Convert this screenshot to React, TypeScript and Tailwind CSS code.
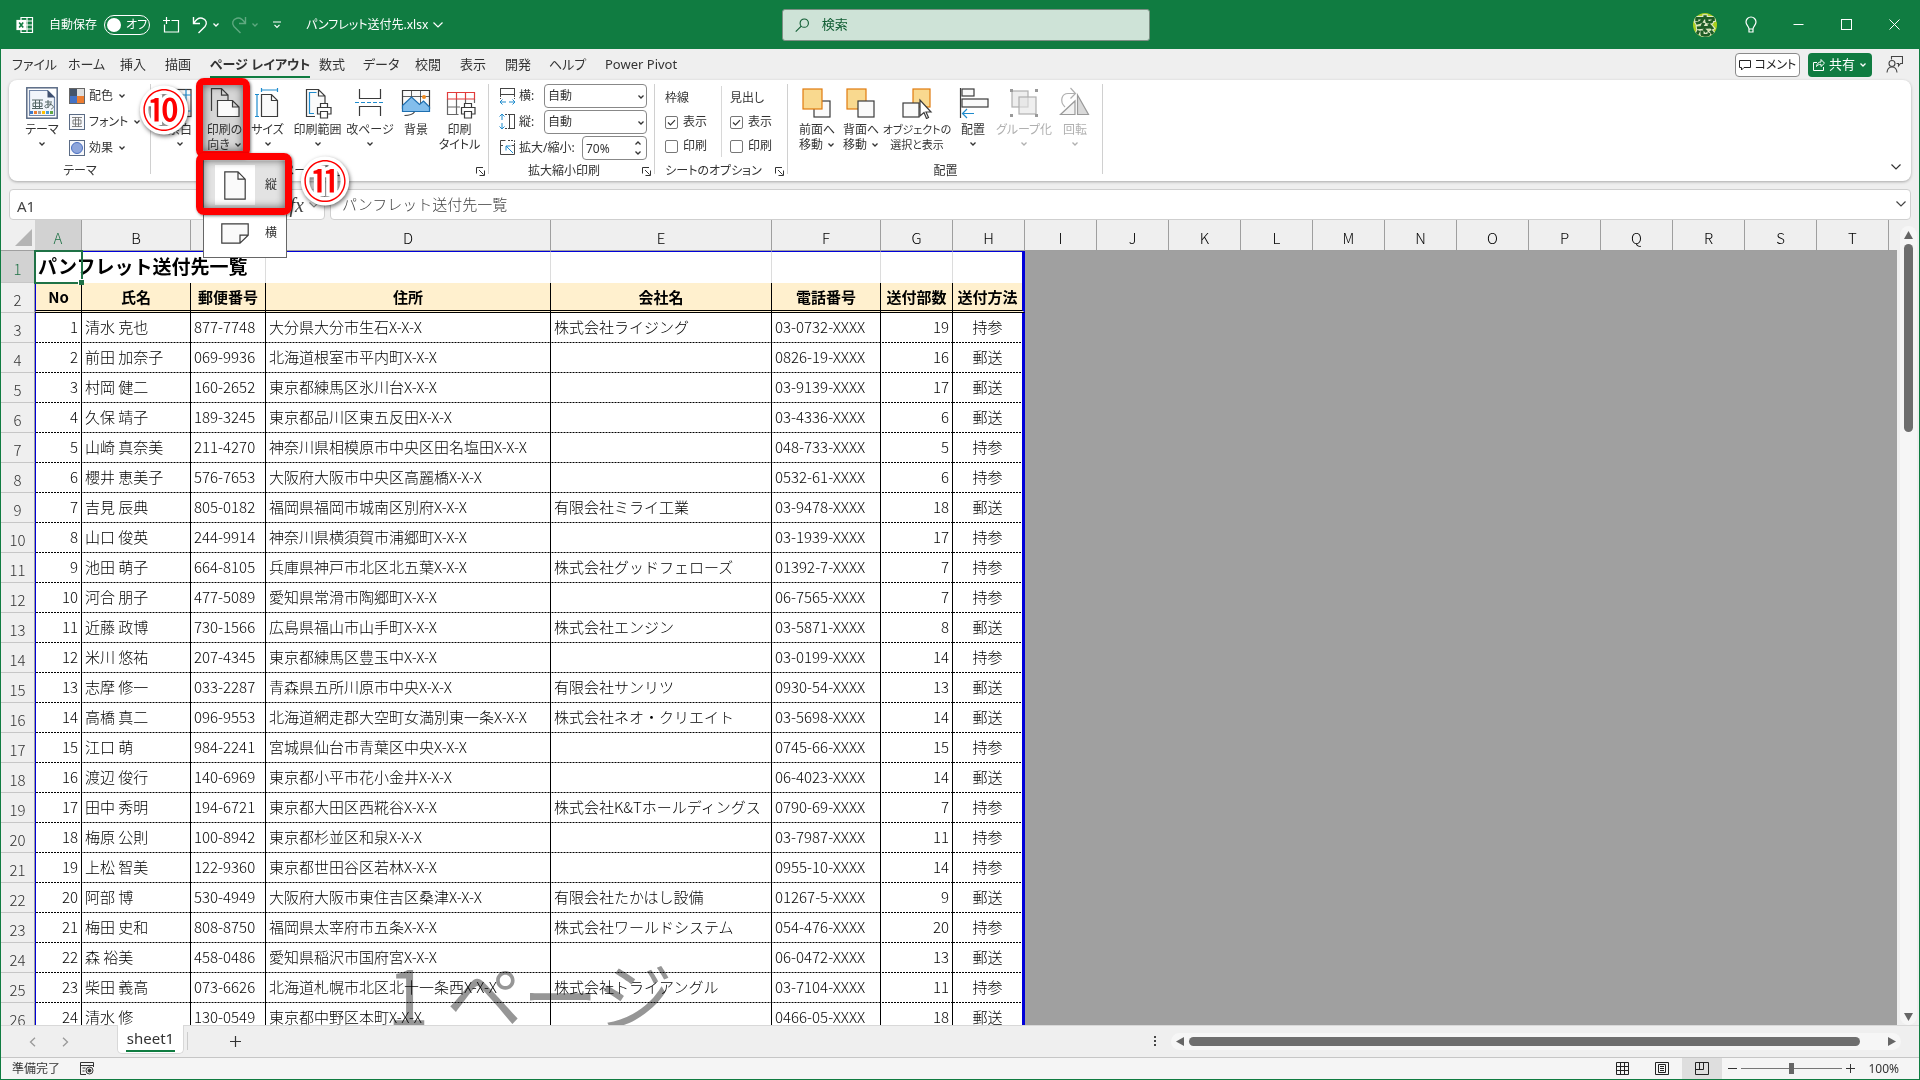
import React from 'react';

interface Tab {
  label: string;
  width: string;
  active?: boolean;
}

const tabs: Tab[] = [
  { label: 'ファイル', width: 'w-14' },
  { label: 'ホーム', width: 'w-[52px]' },
  { label: '挿入', width: 'w-[45px]' },
  { label: '描画', width: 'w-[45px]' },
  { label: 'ページ レイアウト', width: 'w-[109px]', active: true },
  { label: '数式', width: 'w-11' },
  { label: 'データ', width: 'w-[52px]' },
  { label: '校閲', width: 'w-[45px]' },
  { label: '表示', width: 'w-[45px]' },
  { label: '開発', width: 'w-11' },
  { label: 'ヘルプ', width: 'w-14' },
  { label: 'Power Pivot', width: 'w-24' },
];

const columns = [
  { name: 'A', width: 'w-[47px]', title: 'No' },
  { name: 'B', width: 'w-[109px]', title: '氏名' },
  { name: 'C', width: 'w-[75px]', title: '郵便番号' },
  { name: 'D', width: 'w-[285px]', title: '住所' },
  { name: 'E', width: 'w-[221px]', title: '会社名' },
  { name: 'F', width: 'w-[109px]', title: '電話番号' },
  { name: 'G', width: 'w-[72px]', title: '送付部数' },
  { name: 'H', width: 'w-[72px]', title: '送付方法' },
];

const emptyColumns = ['I', 'J', 'K', 'L', 'M', 'N', 'O', 'P', 'Q', 'R', 'S', 'T'];

// 氏名, 郵便番号, 住所, 会社名, 電話番号, 送付部数, 送付方法
type Recipient = [string, string, string, string, string, number, string];

const recipients: Recipient[] = [
  ['清水 克也', '877-7748', '大分県大分市生石X-X-X', '株式会社ライジング', '03-0732-XXXX', 19, '持参'],
  ['前田 加奈子', '069-9936', '北海道根室市平内町X-X-X', '', '0826-19-XXXX', 16, '郵送'],
  ['村岡 健二', '160-2652', '東京都練馬区氷川台X-X-X', '', '03-9139-XXXX', 17, '郵送'],
  ['久保 靖子', '189-3245', '東京都品川区東五反田X-X-X', '', '03-4336-XXXX', 6, '郵送'],
  ['山崎 真奈美', '211-4270', '神奈川県相模原市中央区田名塩田X-X-X', '', '048-733-XXXX', 5, '持参'],
  ['櫻井 恵美子', '576-7653', '大阪府大阪市中央区高麗橋X-X-X', '', '0532-61-XXXX', 6, '持参'],
  ['吉見 辰典', '805-0182', '福岡県福岡市城南区別府X-X-X', '有限会社ミライ工業', '03-9478-XXXX', 18, '郵送'],
  ['山口 俊英', '244-9914', '神奈川県横須賀市浦郷町X-X-X', '', '03-1939-XXXX', 17, '持参'],
  ['池田 萌子', '664-8105', '兵庫県神戸市北区北五葉X-X-X', '株式会社グッドフェローズ', '01392-7-XXXX', 7, '持参'],
  ['河合 朋子', '477-5089', '愛知県常滑市陶郷町X-X-X', '', '06-7565-XXXX', 7, '持参'],
  ['近藤 政博', '730-1566', '広島県福山市山手町X-X-X', '株式会社エンジン', '03-5871-XXXX', 8, '郵送'],
  ['米川 悠祐', '207-4345', '東京都練馬区豊玉中X-X-X', '', '03-0199-XXXX', 14, '持参'],
  ['志摩 修一', '033-2287', '青森県五所川原市中央X-X-X', '有限会社サンリツ', '0930-54-XXXX', 13, '郵送'],
  ['高橋 真二', '096-9553', '北海道網走郡大空町女満別東一条X-X-X', '株式会社ネオ・クリエイト', '03-5698-XXXX', 14, '郵送'],
  ['江口 萌', '984-2241', '宮城県仙台市青葉区中央X-X-X', '', '0745-66-XXXX', 15, '持参'],
  ['渡辺 俊行', '140-6969', '東京都小平市花小金井X-X-X', '', '06-4023-XXXX', 14, '郵送'],
  ['田中 秀明', '194-6721', '東京都大田区西糀谷X-X-X', '株式会社K&Tホールディングス', '0790-69-XXXX', 7, '持参'],
  ['梅原 公則', '100-8942', '東京都杉並区和泉X-X-X', '', '03-7987-XXXX', 11, '持参'],
  ['上松 智美', '122-9360', '東京都世田谷区若林X-X-X', '', '0955-10-XXXX', 14, '持参'],
  ['阿部 博', '530-4949', '大阪府大阪市東住吉区桑津X-X-X', '有限会社たかはし設備', '01267-5-XXXX', 9, '郵送'],
  ['梅田 史和', '808-8750', '福岡県太宰府市五条X-X-X', '株式会社ワールドシステム', '054-476-XXXX', 20, '持参'],
  ['森 裕美', '458-0486', '愛知県稲沢市国府宮X-X-X', '', '06-0472-XXXX', 13, '郵送'],
  ['柴田 義高', '073-6626', '北海道札幌市北区北十一条西X-X-X', '株式会社トライアングル', '03-7104-XXXX', 11, '持参'],
  ['清水 修', '130-0549', '東京都中野区本町X-X-X', '', '0466-05-XXXX', 18, '郵送'],
];

const Chevron: React.FC<{ className?: string; big?: boolean }> = ({ className = '', big }) => (
  <svg className={className} width={big ? 12 : 8} height={big ? 8 : 6} viewBox={big ? '0 0 12 8' : '0 0 8 6'} fill="none" stroke="currentColor" strokeWidth={big ? 1.2 : 1.3}>
    <path d={big ? 'M1.5 1.5 6 6l4.5-4.5' : 'M1.5 1.5 4 4l2.5-2.5'} />
  </svg>
);

const Launcher: React.FC<{ label: string }> = ({ label }) => (
  <button aria-label={label} className="absolute right-[3px] bottom-1 p-px">
    <svg width="9" height="9" viewBox="0 0 9 9" fill="none" stroke="#333" strokeWidth="1">
      <path d="M.5 6.5V.5H7M3 3l4.5 4.5M8.5 3.5v5h-5" />
    </svg>
  </button>
);

interface GroupProps {
  label: string;
  width: string;
  pad?: string;
  launcher?: boolean;
  children: React.ReactNode;
}

const Group: React.FC<GroupProps> = ({ label, width, pad = '', launcher, children }) => (
  <div className={`relative flex flex-col ${width}`}>
    <div className={`flex h-[83px] ${pad}`}>{children}</div>
    <div className={`text-center text-xs leading-4 ${launcher ? 'pr-4' : ''}`}>{label}</div>
    {launcher && <Launcher label={`${label} 詳細`} />}
    <span className="absolute right-0 top-1 h-[90px] w-px bg-[#d0d0d0]" />
  </div>
);

interface BigButtonProps {
  lines: string[];
  width: string;
  arrow?: boolean;
  inlineArrow?: boolean;
  disabled?: boolean;
  pressed?: boolean;
  small?: boolean;
  children: React.ReactNode;
}

const BigButton: React.FC<BigButtonProps> = ({ lines, width, arrow, inlineArrow, disabled, pressed, small, children }) => (
  <button
    disabled={disabled}
    className={`flex h-20 flex-col items-center pt-[7px] leading-[15px] whitespace-nowrap ${small ? 'text-[11px]' : 'text-xs'} ${width} ${disabled ? 'text-[#b0b0b0]' : ''} ${pressed ? 'bg-[#d6d6d6]' : ''}`}
  >
    <svg width="32" height="32" viewBox="0 0 32 32" fill="none" stroke={disabled ? '#b0b0b0' : '#3b3b3b'} strokeWidth="1.2" className="mb-[3px] shrink-0">
      {children}
    </svg>
    <span className="leading-[15px]">{lines[0]}</span>
    {lines[1] && (
      <span className="flex items-center gap-1 leading-[15px]">
        {lines[1]}
        {inlineArrow && <Chevron />}
      </span>
    )}
    {arrow && <Chevron className="mt-1" />}
  </button>
);

const TitleBar = () => (
  <header className="flex h-[49px] shrink-0 items-center bg-[#107c41] text-xs text-white">
    <div className="flex flex-1 items-center pl-4">
      <svg width="18" height="18" viewBox="0 0 18 18" fill="none" stroke="#fff" strokeWidth="1.2">
        <path d="M5 4V1.5h11.5v15H5V14M11 1.5v15M5 5h11.5M9 9h7.5M5 13h11.5" />
        <rect x="1" y="4.5" width="8.5" height="9" fill="#fff" />
        <path d="m3.2 6.5 4 5M7.2 6.5l-4 5" stroke="#107c41" strokeWidth="1.6" />
      </svg>
      <span className="ml-[15px]">自動保存</span>
      <button role="switch" aria-checked="false" className="ml-[7px] flex h-5 w-[46px] items-center gap-[5px] rounded-full border border-white pl-[2px]">
        <span className="size-[14px] rounded-full bg-white" />
        <span className="leading-4">オフ</span>
      </button>
      <button aria-label="上書き保存" className="ml-3">
        <svg width="18" height="18" viewBox="0 0 18 18" fill="none" stroke="#fff" strokeWidth="1.2">
          <path d="M2.500 8.500v7.500h14V4.500H9.500M4.500 1v7M1 4.500h7" />
        </svg>
      </button>
      <button aria-label="元に戻す" className="ml-3 flex items-center gap-1">
        <svg width="16" height="18" viewBox="0 0 16 18" fill="none" stroke="#fff" strokeWidth="1.4">
          <path d="M1.5 1v6.500H8M1.800 7.300C4 3.500 7 1.500 10.200 2.200c4.200 1 5.300 5.300 2.800 8.300L6.500 17" />
        </svg>
        <Chevron />
      </button>
      <button aria-label="やり直し" className="ml-[11px] flex items-center gap-1 text-[#5fa980]">
        <svg width="16" height="18" viewBox="0 0 16 18" fill="none" stroke="currentColor" strokeWidth="1.4">
          <path d="M14.500 1v6.500H8M14.200 7.300C12 3.500 9 1.500 5.800 2.200 1.600 3.200.5 7.500 3 10.500L9.500 17" />
        </svg>
        <Chevron />
      </button>
      <button aria-label="クイック アクセス ツール バーのユーザー設定" className="ml-[13px]">
        <svg width="10" height="8" viewBox="0 0 10 8" fill="none" stroke="#fff" strokeWidth="1.2">
          <path d="M1 1h8M2.500 3.800 5 6.300l2.500-2.500" />
        </svg>
      </button>
      <button className="ml-6 flex items-center gap-1 whitespace-nowrap">
        パンフレット送付先.xlsx
        <Chevron big />
      </button>
    </div>
    <label className="ml-4 flex h-8 w-[368px] items-center rounded-[3px] border border-[#7c8f84] bg-[#cee3d7] pl-3 text-[#0f5c32]">
      <svg width="16" height="16" viewBox="0 0 16 16" fill="none" stroke="currentColor" strokeWidth="1.2">
        <circle cx="10" cy="6" r="4.5" />
        <path d="m6.800 9.200-6 6" />
      </svg>
      <input type="text" placeholder="検索" className="ml-3 w-full bg-transparent text-[13px] outline-none placeholder:text-[#0f5c32]" />
    </label>
    <div className="flex flex-1 items-center justify-end pr-5">
      <button aria-label="アカウント" className="flex size-6 items-center justify-center overflow-hidden rounded-full bg-[#a9cf1c] text-[22px] leading-6 font-black text-[#1f5c25] [-webkit-text-stroke:2px_#dfe9c8] [paint-order:stroke_fill]">
        窓
      </button>
      <button aria-label="ヒント" className="ml-7">
        <svg width="12" height="18" viewBox="0 0 12 18" fill="none" stroke="#fff" strokeWidth="1.2">
          <path d="M4 13c0-2.500-3-4-3-7a5 5 0 0 1 10 0c0 3-3 4.500-3 7zM4 13v3h4v-3" />
        </svg>
      </button>
      <button aria-label="最小化" className="ml-9">
        <svg width="11" height="11" viewBox="0 0 11 11" stroke="#fff"><path d="M.5 5.500h10" /></svg>
      </button>
      <button aria-label="元のサイズに戻す" className="ml-[37px]">
        <svg width="11" height="11" viewBox="0 0 11 11" fill="none" stroke="#fff"><rect x=".5" y=".5" width="10" height="10" /></svg>
      </button>
      <button aria-label="閉じる" className="ml-[37px]">
        <svg width="11" height="11" viewBox="0 0 11 11" stroke="#fff"><path d="m.5.5 10 10M10.500.5l-10 10" /></svg>
      </button>
    </div>
  </header>
);

const TabRow = () => (
  <div className="flex h-[31px] shrink-0 items-center pr-4 pl-[11px]">
    <nav className="flex flex-1 text-[13px] leading-[18px] text-[#333]">
      {tabs.map(tab => (
        <div key={tab.label} className={`shrink-0 ${tab.width}`}>
          <button className={`border-b-2 pt-[3px] pb-[3px] whitespace-nowrap ${tab.active ? 'border-[#107c41] font-bold' : 'border-transparent'}`}>
            {tab.label}
          </button>
        </div>
      ))}
    </nav>
    <button className="flex h-6 w-[65px] items-center justify-center gap-1 rounded-[4px] border border-[#8a8a8a] bg-white text-xs whitespace-nowrap text-[#222]">
      <svg width="12" height="12" viewBox="0 0 12 12" fill="none" stroke="currentColor">
        <path d="M.5 1.500h11v7H5l-2.500 2.500V8.500h-2z" />
      </svg>
      コメント
    </button>
    <button className="ml-2 flex h-6 w-16 items-center justify-center gap-1 rounded-[4px] bg-[#107c41] text-[13px] whitespace-nowrap text-white">
      <svg width="12" height="13" viewBox="0 0 12 13" fill="none" stroke="currentColor">
        <path d="M4 4.500H.5v8h10V9M3.500 8.500c.5-3 2-4.500 4.500-4.500V1.500l3.500 3.700L8 8.500V6.300C6 6.300 4.500 7 3.500 8.500z" />
      </svg>
      共有
      <Chevron />
    </button>
    <button aria-label="状態の表示" className="ml-[14px]">
      <svg width="17" height="17" viewBox="0 0 17 17" fill="none" stroke="#444" strokeWidth="1.1">
        <path d="M5.500 3.500v-3h11v7h-2l-2 2.500V7.500h-2M1 16.500c.3-3.500 2-5.500 5-5.500s4.700 2 5 5.500" />
        <circle cx="6" cy="7.500" r="3" />
      </svg>
    </button>
  </div>
);

const ThemeItem: React.FC<{ label: string; children: React.ReactNode }> = ({ label, children }) => (
  <button className="flex h-[26px] items-center gap-1 text-xs whitespace-nowrap">
    <svg width="16" height="16" viewBox="0 0 16 16">{children}</svg>
    {label}
    <Chevron className="ml-px" />
  </button>
);

const Check: React.FC<{ label: string; on?: boolean }> = ({ label, on }) => (
  <label className="flex h-6 items-center gap-[5px] text-xs whitespace-nowrap">
    <span className="relative flex size-[13px] shrink-0">
      <input type="checkbox" defaultChecked={on} className="peer size-[13px] appearance-none rounded-[2px] border border-[#777] bg-white" />
      <svg className="pointer-events-none absolute top-0 left-0 hidden peer-checked:block" width="13" height="13" viewBox="0 0 13 13" fill="none" stroke="#333" strokeWidth="1.2">
        <path d="m3 6.500 2.500 2.500L10 4.200" />
      </svg>
    </span>
    {label}
  </label>
);

const OrientationMenu = () => (
  <div className="absolute top-[78px] left-0 z-20 w-[84px] border border-[#666] bg-white pt-[2px] text-xs">
    <button className="flex h-12 w-full items-center bg-[#e3e3e3] pl-[11px]">
      <span className="flex size-10 items-center justify-center bg-white">
        <svg width="22" height="29" viewBox="0 0 22 29" fill="#fafafa" stroke="#3b3b3b" strokeWidth="1.2">
          <path d="M.8.800h13.200l7.200 7.400v20H.800zM14 .800v7.400h7.200" />
        </svg>
      </span>
      <span className="ml-[10px]">縦</span>
    </button>
    <button className="flex h-12 w-full items-center pl-[17px]">
      <svg width="28" height="21" viewBox="0 0 28 21" fill="#fafafa" stroke="#3b3b3b" strokeWidth="1.2">
        <path d="M.8.800h26.400v11.400L19 20.200H.800zM19 20.200v-8h8.200" />
      </svg>
      <span className="ml-4">横</span>
    </button>
  </div>
);

const Callout: React.FC<{ text: string; className: string }> = ({ text, className }) => (
  <span className={`pointer-events-none absolute z-40 font-['Noto_Sans_CJK_JP',sans-serif] text-[44px] leading-[48px] font-medium text-[#f00] drop-shadow-[1px_2px_2px_rgba(0,0,0,0.55)] [-webkit-text-stroke:7px_#fff] [paint-order:stroke_fill] ${className}`}>
    {text}
  </span>
);

const Ribbon = () => (
  <section className="relative z-10 mx-2 flex h-[101px] shrink-0 rounded-[8px] bg-white text-[#333] shadow-[0_1px_3px_rgba(0,0,0,0.3)]">
    <Group label="テーマ" width="w-[142px]">
      <BigButton lines={['テーマ']} width="w-[60px] pl-[6px]" arrow>
        <rect x=".8" y=".8" width="30.4" height="30.4" fill="#fff" stroke="#5a6b85" strokeWidth="1.5" />
        <path d="M3.500 3.500h18l7 7v18h-25z" fill="#f1f5fb" stroke="#7186a8" />
        <path d="M21.500 3v7.500H29z" fill="#3f5070" stroke="none" />
        <path d="M6 13h11M6 21.500h11M9.500 13v8.500M13.500 13v8.500M7 16h9v3.500H7zM19 15h7M22 13v8M25 16c-1 4-5 6-6 4s4-4 7-2 0 4-1 4" stroke="#566" strokeWidth="1" />
        <g stroke="none">
          <rect x="4" y="24" width="3" height="3" fill="#3c78c8" />
          <rect x="8" y="24" width="3" height="3" fill="#ed7d31" />
          <rect x="12" y="24" width="3" height="3" fill="#a0a0a0" />
          <rect x="16" y="24" width="3" height="3" fill="#ffc000" />
          <rect x="20" y="24" width="3" height="3" fill="#4a9ad4" />
          <rect x="24" y="24" width="3" height="3" fill="#62a744" />
        </g>
      </BigButton>
      <div className="flex flex-col pt-[3px]">
        <ThemeItem label="配色">
          <path d="M0 0h8v8H0z" fill="#44546a" />
          <path d="M8 0h8v8H8z" fill="#dedede" />
          <path d="M0 8h8v8H0z" fill="#4472c4" />
          <path d="M8 8h8v8H8z" fill="#ed7d31" />
          <rect x=".5" y=".5" width="15" height="15" fill="none" stroke="#666" />
        </ThemeItem>
        <ThemeItem label="フォント">
          <rect x=".5" y=".5" width="15" height="15" fill="#f7f8fb" stroke="#5a6b85" />
          <path d="M3 3.500h10M3 12.500h10M6.500 3.500v9M9.500 3.500v9M4 6h8v4H4z" fill="none" stroke="#666" strokeWidth=".8" />
        </ThemeItem>
        <ThemeItem label="効果">
          <rect x=".5" y=".5" width="15" height="15" fill="#f7f8fb" stroke="#5a6b85" />
          <circle cx="8" cy="8" r="5.500" fill="#8ea6dc" stroke="#4a6fc0" />
        </ThemeItem>
      </div>
    </Group>

    <Group label="ページ設定" width="w-[338px]" pad="pl-[6px]" launcher>
      <BigButton lines={['余白']} width="w-[46px]" arrow>
        <rect x="5" y="2.500" width="22" height="27" fill="#fafafa" />
        <path d="M10 2.500v27M22 2.500v27M5 8h22M5 24h22" stroke="#1e8bcd" />
      </BigButton>
      <div className="relative">
        <BigButton lines={['印刷の', '向き']} width="w-[43px]" inlineArrow pressed>
          <path d="M2.500 24V1.600h10l6.500 6.500v5.400M12.500 1.600v6.500H19" fill="none" />
          <path d="M8.500 29.500v-16h15l6.500 6.500v9.500zM23.500 13.500V20H30" fill="#fafafa" />
        </BigButton>
        <OrientationMenu />
        <span className="pointer-events-none absolute -top-[2px] -left-[7px] z-30 h-20 w-[54px] rounded-[8px] border-[7px] border-[#f00] shadow-[inset_0_0_8px_rgba(0,0,0,0.6),1px_1px_3px_rgba(0,0,0,0.5)]" />
        <span className="pointer-events-none absolute top-[73px] -left-[7px] z-30 h-[62px] w-[96px] rounded-[8px] border-[7px] border-[#f00] shadow-[inset_0_0_8px_rgba(0,0,0,0.6),1px_1px_3px_rgba(0,0,0,0.5)]" />
        <Callout text="⑩" className="top-1 -left-[61px]" />
        <Callout text="⑪" className="top-[75px] left-[100px]" />
      </div>
      <BigButton lines={['サイズ']} width="w-[43px]" arrow>
        <path d="M9.500 29.500v-22h10l6 6v16zM19.500 7.500v6h6" fill="#fafafa" />
        <path d="M9.500 3h16M9.500 1v4M25.500 1v4M5 7.500v22M3 7.500h4M3 29.500h4" stroke="#1e8bcd" />
      </BigButton>
      <BigButton lines={['印刷範囲']} width="w-[57px]" arrow>
        <path d="M13 29.500H4.500v-27h12l6.500 6.500v7M16.500 2.500V9H23" fill="#fafafa" />
        <path d="M12 26.500H7.500v-21h7" stroke="#1e8bcd" />
        <path d="M18.500 20.500v-4h7v4M18.500 27h-3v-6.500H29V27h-3.500M18.500 24.500h7v6.500h-7z" fill="#fff" />
      </BigButton>
      <BigButton lines={['改ページ']} width="w-12" arrow>
        <path d="M5.500 2v9.500h21V2M5.500 29v-9.500h21V29" />
        <path d="M1 15.500h30" stroke="#1e8bcd" strokeDasharray="4 2" />
      </BigButton>
      <BigButton lines={['背景']} width="w-11">
        <path d="M2.500 22V3.500h27V22" fill="#fafafa" />
        <path d="M2.500 9.500h27M11.500 3.500v14M20.500 3.500v14" strokeWidth=".8" />
        <path d="M2.500 24.500v-6l9-8.500 8 7.500 4-3.500 6 6v4.500z" fill="#83beec" stroke="#1e6fb0" />
        <circle cx="24" cy="10" r="2" fill="#f28a1c" stroke="none" />
        <path d="M4.500 28.500c3 0 8-1 10-3.500" />
      </BigButton>
      <BigButton lines={['印刷', 'タイトル']} width="w-[43px]">
        <path d="M3.500 12v15.500h11M3.500 20H16M12.500 12v15.500M21.500 12v5M30.500 12v4" stroke="#666" />
        <path d="M3.500 5.500h27V12h-27zM12.500 5.500V12M21.500 5.500V12" stroke="#e23b3b" />
        <path d="M20.500 20.500v-4h7v4M20.500 27h-3v-6.500H31V27h-3.500M20.500 24.500h7v6.500h-7z" fill="#fff" />
      </BigButton>
    </Group>

    <Group label="拡大縮小印刷" width="w-[166px]" launcher>
      <div className="flex flex-1 flex-col pt-[3px] pr-[8px] pl-[10px] text-xs">
        <div className="flex h-[26px] items-center">
          <svg width="18" height="18" viewBox="0 0 18 18" fill="none" stroke="#444">
            <rect x="1.500" y="1.500" width="14" height="6" />
            <path d="M1.500 8v4M15.500 8v4" strokeDasharray="2 1" />
            <path d="M1 15h6M3.500 12.500 1 15l2.500 2.500M10 15h6M13.500 12.500 16 15l-2.500 2.500" stroke="#1e8bcd" />
          </svg>
          <label htmlFor="fit-width" className="ml-[2px] flex-1">横:</label>
          <span className="relative">
            <select id="fit-width" className="h-6 w-[103px] appearance-none rounded-[4px] border border-[#888] bg-white pl-[3px] leading-5">
              <option>自動</option>
            </select>
            <Chevron className="pointer-events-none absolute top-[10px] right-[2px]" />
          </span>
        </div>
        <div className="flex h-[26px] items-center">
          <svg width="18" height="18" viewBox="0 0 18 18" fill="none" stroke="#444">
            <rect x="10.500" y="1.500" width="5" height="14" />
            <path d="M6 1.500h4M6 15.500h4" strokeDasharray="2 1" />
            <path d="M3 1v6M.500 3.500 3 1l2.500 2.500M3 10v6M.500 13.500 3 16l2.500-2.500" stroke="#1e8bcd" />
          </svg>
          <label htmlFor="fit-height" className="ml-[2px] flex-1">縦:</label>
          <span className="relative">
            <select id="fit-height" className="h-6 w-[103px] appearance-none rounded-[4px] border border-[#888] bg-white pl-[3px] leading-5">
              <option>自動</option>
            </select>
            <Chevron className="pointer-events-none absolute top-[10px] right-[2px]" />
          </span>
        </div>
        <div className="flex h-[26px] items-center">
          <svg width="18" height="18" viewBox="0 0 18 18" fill="none" stroke="#444">
            <path d="M1.500 7V1.500h5M4 6.500h-2.500v9h14v-9h-3" />
            <path d="M9 1.500h6.500V6" strokeDasharray="2 1" />
            <path d="m14 14-7-7M7 11.500V7h4.500" stroke="#1e8bcd" />
          </svg>
          <label htmlFor="scale" className="ml-[2px] flex-1 whitespace-nowrap">拡大/縮小:</label>
          <span className="relative">
            <input id="scale" type="text" defaultValue="70%" className="h-6 w-[65px] rounded-[4px] border border-[#888] bg-white pl-[3px]" />
            <Chevron className="pointer-events-none absolute top-1 right-[5px] rotate-180" />
            <Chevron className="pointer-events-none absolute right-[5px] bottom-1" />
          </span>
        </div>
      </div>
    </Group>

    <Group label="シートのオプション" width="w-[133px]" launcher>
      <div role="group" aria-labelledby="gridlines" className="w-[66px] pt-[6px] pl-[10px]">
        <div id="gridlines" className="text-xs leading-6">枠線</div>
        <Check label="表示" on />
        <Check label="印刷" />
      </div>
      <div role="group" aria-labelledby="headings" className="my-[6px] w-[66px] border-l border-[#d8d8d8] pl-2">
        <div id="headings" className="text-xs leading-6">見出し</div>
        <Check label="表示" on />
        <Check label="印刷" />
      </div>
    </Group>

    <Group label="配置" width="w-[315px]" pad="pl-[7px]">
      <BigButton lines={['前面へ', '移動']} width="w-11" inlineArrow>
        <rect x="13" y="14" width="16" height="16" fill="#fafafa" />
        <rect x="2" y="2" width="19" height="20" fill="#f9d98f" stroke="#e07b0e" />
      </BigButton>
      <BigButton lines={['背面へ', '移動']} width="w-11" inlineArrow>
        <rect x="2" y="2" width="19" height="20" fill="#f9d98f" stroke="#e07b0e" />
        <rect x="13" y="14" width="16" height="16" fill="#fafafa" />
      </BigButton>
      <BigButton lines={['オブジェクトの', '選択と表示']} width="w-[68px]" small>
        <rect x="12" y="2" width="17" height="18" fill="#f9d98f" stroke="#e07b0e" />
        <rect x="2" y="16" width="16" height="14" fill="#fafafa" />
        <path d="M19 13v16l4-3.500 2.500 6 2-1-2.500-5.500h5z" fill="#fff" />
      </BigButton>
      <BigButton lines={['配置']} width="w-11" arrow>
        <path d="M3.500 1v30" />
        <rect x="5" y="2" width="12" height="7" fill="#fafafa" />
        <rect x="5" y="12" width="26" height="8" fill="#fafafa" />
        <path d="M17 26.500H5.500M10 22l-4.500 4.500L10 31" stroke="#1e8bcd" />
      </BigButton>
      <BigButton lines={['グループ化']} width="w-[58px]" arrow disabled>
        <rect x="4" y="4" width="16" height="16" fill="#eee" />
        <rect x="11" y="10" width="17" height="17" fill="#e4e4e4" fillOpacity=".6" />
        <path d="M2 2h3v3H2zM27 2h3v3h-3zM2 27h3v3H2zM27 27h3v3h-3z" fill="#999" stroke="none" />
      </BigButton>
      <BigButton lines={['回転']} width="w-11" arrow disabled>
        <path d="M18.500 8v19.500h11z" fill="#d9d9d9" stroke="#999" />
        <path d="M16 14v13.500H1.500z" fill="#f2f2f2" stroke="#999" />
        <path d="M6 20C0 14 3 6.500 9 6.500h7M11.500 1l5 5.500-5 5" />
      </BigButton>
    </Group>
    <button aria-label="リボンの表示オプション" className="absolute right-[9px] bottom-[10px]">
      <Chevron big />
    </button>
  </section>
);

const FormulaBar = () => (
  <div className="mt-2 flex h-[31px] shrink-0 gap-[5px] px-2 text-[15px] text-[#444]">
    <div className="flex w-[316px] items-center rounded-[4px] border border-[#cfcfcf] bg-white pl-[7px]">
      <input aria-label="名前ボックス" type="text" defaultValue="A1" className="w-60 pt-1 outline-none" />
      <span className="ml-auto font-['Liberation_Serif',serif] text-xl leading-5 italic">fx</span>
      <Chevron big className="mx-1 text-[#888]" />
    </div>
    <div className="flex flex-1 items-center rounded-[4px] border border-[#cfcfcf] bg-white pr-[3px] pb-px pl-[11px]">
      <input aria-label="数式バー" type="text" defaultValue="パンフレット送付先一覧" className="flex-1 font-['Noto_Sans_CJK_JP',sans-serif] text-[15px] leading-5 font-light outline-none [font-feature-settings:normal]" />
      <Chevron big />
    </div>
  </div>
);

const RowHead: React.FC<{ row: number; active?: boolean }> = ({ row, active }) => (
  <th className={`border-r border-b border-[#9f9f9f] border-b-[#c6c6c6] pt-1 font-light ${active ? 'bg-[#d2d2d2] text-[#1f7246]' : 'bg-[#efefef] text-[#333]'}`}>
    {row}
  </th>
);

// Last column is closed by the blue edge of the print area
const cellEdge = (last?: boolean) => (last ? 'border-r-[3px] border-r-[#0000d8]' : 'border-r border-r-black');

const Sheet = () => (
  <div className="relative flex-1 overflow-hidden bg-[#a0a0a0]">
    <table className="w-full table-fixed border-separate border-spacing-0 font-['Noto_Sans_CJK_JP',sans-serif] text-[15px] leading-5 font-light text-black [font-feature-settings:normal]">
      <thead>
        <tr className="h-[31px]">
          <th className="w-[34px] border-b border-[#9f9f9f] bg-[#efefef]">
            <svg className="mt-1 ml-[14px]" width="17" height="17" viewBox="0 0 17 17"><path d="M17 0v17H0z" fill="#b4b4b4" /></svg>
          </th>
          {columns.map(col => (
            <th
              key={col.name}
              className={`border-r border-b border-[#9f9f9f] pt-[6px] font-light ${col.width} ${col.name === 'A' ? 'bg-[#d2d2d2] text-[#1f7246]' : 'bg-[#efefef] text-black'}`}
            >
              {col.name}
            </th>
          ))}
          {emptyColumns.map(name => (
            <th key={name} className="w-[72px] border-r border-b border-[#9f9f9f] bg-[#efefef] pt-[6px] font-light text-black">
              {name}
            </th>
          ))}
          <th className="border-b border-[#9f9f9f] bg-[#efefef]" />
        </tr>
      </thead>
      <tbody>
        <tr className="h-8">
          <RowHead row={1} active />
          <td className="relative border-t border-l border-[#0000d8] bg-white text-[19px] font-bold whitespace-nowrap">
            <span className="absolute top-[2px] left-[2px] leading-6">パンフレット送付先一覧</span>
            <span className="absolute -top-[2px] -right-px -bottom-px -left-[2px] z-[1] border-2 border-[#1f7246]" />
            <span className="absolute -right-[2px] -bottom-[2px] z-[2] size-[6px] border-t border-l border-white bg-[#1f7246]" />
          </td>
          {columns.slice(1).map(col => (
            <td
              key={col.name}
              className={`border-t border-t-[#0000d8] bg-white ${
                col.name === 'B' ? '' : col.name === 'H' ? 'border-r-[3px] border-r-[#0000d8]' : 'border-r border-r-[#dcdcdc]'
              }`}
            />
          ))}
        </tr>
        <tr className="h-[30px]">
          <RowHead row={2} />
          {columns.map(col => (
            <td
              key={col.name}
              className={`border-b-[3px] border-b-black bg-[#fff0ce] text-center font-bold whitespace-nowrap [border-bottom-style:double] ${col.name === 'A' ? 'border-l border-l-[#0000d8]' : ''} ${cellEdge(col.name === 'H')}`}
            >
              {col.title}
            </td>
          ))}
        </tr>
        {recipients.map(([name, zip, address, company, phone, count, method], i) => {
          const cell =
            'h-[30px] px-[3px] pb-[3px] whitespace-nowrap bg-white bg-[linear-gradient(90deg,#000_0_2px,#fff_2px)] bg-[length:3px_1px] bg-bottom bg-repeat-x';
          return (
            <tr key={name} className="h-[30px]">
              <RowHead row={i + 3} />
              <td className={`${cell} border-l border-l-[#0000d8] text-right ${cellEdge()}`}>{i + 1}</td>
              <td className={`${cell} ${cellEdge()}`}>{name}</td>
              <td className={`${cell} ${cellEdge()}`}>{zip}</td>
              <td className={`${cell} ${cellEdge()}`}>{address}</td>
              <td className={`${cell} ${cellEdge()}`}>{company}</td>
              <td className={`${cell} ${cellEdge()}`}>{phone}</td>
              <td className={`${cell} text-right ${cellEdge()}`}>{count}</td>
              <td className={`${cell} text-center ${cellEdge(true)}`}>{method}</td>
            </tr>
          );
        })}
      </tbody>
    </table>
    {/* Page number behind the cells in page break preview */}
    <div className="pointer-events-none absolute top-[733px] left-[386px] font-['Noto_Sans_CJK_JP',sans-serif] text-[76px] leading-[80px] whitespace-pre text-[#969696] mix-blend-multiply [font-feature-settings:normal]">
      1 ページ
    </div>
  </div>
);

const VerticalScroll = () => (
  <div className="flex w-[22px] shrink-0 flex-col items-center pt-[6px]">
    <div className="flex w-[17px] flex-1 flex-col items-center rounded-full bg-[#f6f6f6] pt-[5px] pb-1">
      <svg width="9" height="8" viewBox="0 0 9 8"><path d="M4.500 0 9 8H0z" fill="#666" /></svg>
      <span className="mt-[5px] h-[188px] w-[9px] rounded-full bg-[#6e6e6e]" />
      <svg className="mt-auto" width="9" height="8" viewBox="0 0 9 8"><path d="M4.500 8 9 0H0z" fill="#666" /></svg>
    </div>
  </div>
);

const SheetTabs = () => (
  <div className="flex h-8 shrink-0 border-t border-[#d8d8d8] text-[#333]">
    <div className="flex items-center gap-[26px] pl-7">
      <button aria-label="前のシート">
        <svg width="7" height="10" viewBox="0 0 7 10" fill="none" stroke="#999" strokeWidth="1.3"><path d="M6 .800 1.500 5 6 9.200" /></svg>
      </button>
      <button aria-label="次のシート">
        <svg width="7" height="10" viewBox="0 0 7 10" fill="none" stroke="#999" strokeWidth="1.3"><path d="M1 .800 5.500 5 1 9.200" /></svg>
      </button>
    </div>
    <button className="-mt-px ml-[48px] h-[29px] w-[67px] rounded-b-[5px] border border-t-0 border-[#d8d8d8] bg-white px-2">
      <span className="block border-b-2 border-[#107c41] text-[15px] leading-[23px]">sheet1</span>
    </button>
    <span className="mt-[6px] ml-[3px] h-[18px] w-px bg-[#ccc]" />
    <button aria-label="新しいシート" className="ml-[42px]">
      <svg width="11" height="11" viewBox="0 0 11 11" stroke="#333" strokeWidth="1.2"><path d="M0 5.500h11M5.500 0v11" /></svg>
    </button>
    <div className="ml-auto flex w-[765px] items-center pb-px">
      <svg width="2" height="10" viewBox="0 0 2 10" fill="#444"><path d="M0 0h2v2H0zM0 4h2v2H0zM0 8h2v2H0z" /></svg>
      <div className="mr-[18px] ml-[15px] flex h-[17px] flex-1 items-center rounded-full bg-[#f6f6f6] px-[5px]">
        <svg width="8" height="9" viewBox="0 0 8 9"><path d="M0 4.500 8 0v9z" fill="#666" /></svg>
        <span className="mr-7 ml-[5px] h-[9px] flex-1 rounded-full bg-[#6e6e6e]" />
        <svg width="8" height="9" viewBox="0 0 8 9"><path d="M8 4.500 0 0v9z" fill="#666" /></svg>
      </div>
    </div>
  </div>
);

const StatusBar = () => (
  <footer className="flex h-[22px] shrink-0 items-center border-t border-[#c6c6c6] bg-[#f5f5f5] pr-5 pl-[11px] text-xs text-[#333]">
    <span>準備完了</span>
    <button aria-label="マクロの記録" className="ml-5">
      <svg width="14" height="13" viewBox="0 0 14 13" fill="none" stroke="#333">
        <path d="M6 12.500H.500V.500h13V5M.500 3.500h13M2.500 6h3M2.500 9h2" />
        <circle cx="9.500" cy="8.500" r="3.500" />
        <circle cx="9.500" cy="8.500" r="1.500" fill="#333" />
      </svg>
    </button>
    <div className="ml-auto flex h-full items-center">
      <button aria-label="標準" className="mr-[26px]">
        <svg width="13" height="13" viewBox="0 0 13 13" fill="none" stroke="#222"><path d="M.500.500h12v12H.500zM4.500.500v12M8.500.500v12M.500 4.500h12M.500 8.500h12" /></svg>
      </button>
      <button aria-label="ページ レイアウト表示" className="mr-[13px]">
        <svg width="14" height="13" viewBox="0 0 14 13" fill="none" stroke="#222"><path d="M.500.500h13v12H.500zM3.500 2.500h7v8h-7zM5 4.500h4M5 6.500h4M5 8.500h4" /></svg>
      </button>
      <button aria-label="改ページ プレビュー" className="flex h-full w-10 items-center justify-center bg-[#dedede]">
        <svg width="14" height="13" viewBox="0 0 14 13" fill="none" stroke="#222"><path d="M.500.500h13v12H.500zM.500 7.500h8v-7M4.500.500v7" /></svg>
      </button>
      <button aria-label="縮小" className="ml-[6px]">
        <svg width="9" height="9" viewBox="0 0 9 9" stroke="#333"><path d="M0 4.500h9" /></svg>
      </button>
      <input
        aria-label="ズーム"
        type="range"
        min="10"
        max="190"
        defaultValue="100"
        className="mx-1 h-[11px] w-[101px] appearance-none bg-[linear-gradient(#777,#777)] bg-[length:100%_1px] bg-center bg-no-repeat [&::-webkit-slider-thumb]:h-[11px] [&::-webkit-slider-thumb]:w-[5px] [&::-webkit-slider-thumb]:appearance-none [&::-webkit-slider-thumb]:bg-[#666]"
      />
      <button aria-label="拡大">
        <svg width="9" height="9" viewBox="0 0 9 9" stroke="#333"><path d="M0 4.500h9M4.500 0v9" /></svg>
      </button>
      <span className="ml-[13px]">100%</span>
    </div>
  </footer>
);

const App: React.FC = () => {
  return (
    <div className="flex h-screen flex-col overflow-hidden bg-[#efefef] font-['Noto_Sans','Noto_Sans_CJK_JP',sans-serif] [font-feature-settings:'palt']">
      <TitleBar />
      <main className="flex min-h-0 flex-1 flex-col border-x border-b border-[#107c41]">
        <TabRow />
        <Ribbon />
        <FormulaBar />
        <div className="flex min-h-0 flex-1">
          <Sheet />
          <VerticalScroll />
        </div>
        <SheetTabs />
        <StatusBar />
      </main>
    </div>
  );
};

export default App;
